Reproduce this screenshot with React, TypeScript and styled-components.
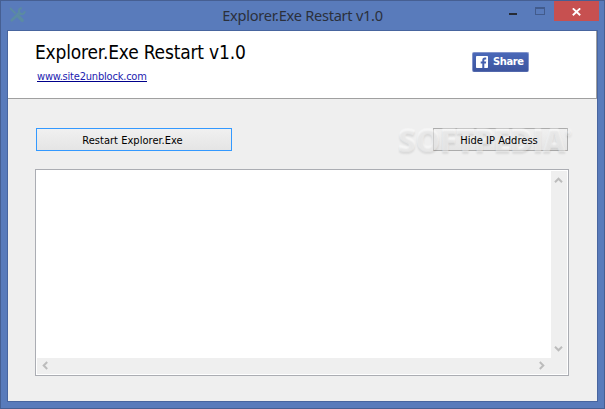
import styled, { createGlobalStyle } from "styled-components";

function App() {
  return (
    <Window>
      <GlobalStyle />
      <TitleBar>
        <ToolsIcon />
        <Caption>Explorer.Exe Restart v1.0</Caption>
        <WindowControls>
          <Minimize aria-label="Minimize" />
          <Maximize aria-label="Maximize" />
          <Close aria-label="Close">
            <svg width="9" height="8" viewBox="0 0 9 8">
              <path d="M0.8 0.4 L8.2 7.2 M8.2 0.4 L0.8 7.2" stroke="#fff" strokeWidth="1.9" />
            </svg>
          </Close>
        </WindowControls>
      </TitleBar>
      <Client>
        <Header>
          <div>
            <Title>Explorer.Exe Restart v1.0</Title>
            <SiteLink href="#">www.site2unblock.com</SiteLink>
          </div>
          <ShareButton>
            <svg width="12" height="12" viewBox="0 0 12 12">
              <rect width="12" height="12" rx="0.8" fill="#fff" />
              <path
                d="M6.3 12V7.4H4.7V5.5H6.3V4.3C6.3 2.5 7.3 1.6 8.9 1.6H10.2V3.4H9.3C8.5 3.4 8.3 3.8 8.3 4.4V5.5H10.2L9.9 7.4H8.3V12Z"
                fill="#4560ae"
              />
            </svg>
            <span>Share</span>
          </ShareButton>
        </Header>
        <Body>
          <ButtonRow>
            <Button $width={196} $focused>
              <Label>Restart Explorer.Exe</Label>
            </Button>
            <Button $width={135}>
              <Label>Hide IP Address</Label>
            </Button>
            <Watermark>
              SOFTPEDIA<sup>®</sup>
            </Watermark>
          </ButtonRow>
          <LogBox>
            <LogText />
            <VerticalBar>
              <Chevron direction="up" />
              <Chevron direction="down" />
            </VerticalBar>
            <HorizontalBar>
              <Chevron direction="left" />
              <Chevron direction="right" />
            </HorizontalBar>
          </LogBox>
        </Body>
      </Client>
    </Window>
  );
}
export default App;

function ToolsIcon() {
  return (
    <svg width="17" height="16" viewBox="0 0 17 16" fill="none" stroke="#5b8ba2">
      <path d="M1 1 L6.5 6.5" strokeWidth="1.8" />
      <path d="M9.4 9.4 L13.2 13.2" strokeWidth="3.4" strokeLinecap="round" />
      <path d="M2.8 13.2 L10.4 5.8" strokeWidth="2.8" strokeLinecap="round" />
      <path d="M12.8 1.3 A2.9 2.9 0 1 0 15.7 4.3" strokeWidth="2" />
    </svg>
  );
}

const chevrons = {
  up: "M1 6.2 L4.5 2.7 L8 6.2",
  down: "M1 2.8 L4.5 6.3 L8 2.8",
  left: "M6.2 1 L2.7 4.5 L6.2 8",
  right: "M2.8 1 L6.3 4.5 L2.8 8",
};

function Chevron({ direction }: { direction: keyof typeof chevrons }) {
  return (
    <svg width="9" height="9" viewBox="0 0 9 9" fill="none">
      <path d={chevrons[direction]} stroke="#bcbcbc" strokeWidth="2" />
    </svg>
  );
}

const GlobalStyle = createGlobalStyle`
  * {
    box-sizing: border-box;
  }
  body {
    margin: 0;
    font-family: "DejaVu Sans Condensed", "DejaVu Sans", sans-serif;
    font-stretch: condensed;
  }
`;

const Window = styled.div`
  display: flex;
  flex-direction: column;
  width: 605px;
  height: 409px;
  padding: 0 6px 6px;
  background: #597bbb;
  border: 1px solid #465f92;
`;

const TitleBar = styled.header`
  display: grid;
  grid-template-columns: 100px 1fr 100px;
  height: 29px;

  > svg {
    margin: 6px 0 0 2px;
  }
`;

const Caption = styled.div`
  padding-top: 4px;
  text-align: center;
  font: 14.6px/20px "Noto Sans", sans-serif;
  letter-spacing: -0.27px;
  white-space: nowrap;
  color: #2b303b;
`;

const WindowControls = styled.div`
  display: flex;
  align-items: flex-start;
  justify-content: flex-end;
  margin-right: -1px;
`;

const Minimize = styled.button`
  width: 8px;
  height: 2px;
  margin: 12px 18px 0 0;
  padding: 0;
  border: none;
  background: #262b35;
`;

const Maximize = styled.button`
  width: 10px;
  height: 8px;
  margin: 6px 9px 0 0;
  padding: 0;
  border: 1px solid #425b8c;
  border-top-width: 2px;
  background: none;
`;

const Close = styled.button`
  display: flex;
  width: 45px;
  height: 20px;
  padding: 7px 0 0 18px;
  border: none;
  background: #c75050;
`;

const Client = styled.main`
  flex: 1;
  border: 1px solid #48659f;
  background: #efefef;
`;

const Header = styled.section`
  display: flex;
  justify-content: space-between;
  height: 68px;
  padding: 0 67px 0 27px;
  background: #fff;
  border-right: 1px solid #a0a0a0;
  border-bottom: 1px solid #a0a0a0;
`;

const Title = styled.h1`
  margin: 8px 0 0;
  font-size: 19px;
  font-weight: 400;
  line-height: 26px;
  letter-spacing: -0.18px;
  white-space: nowrap;
  color: #000;
`;

const SiteLink = styled.a`
  display: block;
  width: 110px;
  height: 12px;
  margin: 5px 0 0 2px;
  border-bottom: 1px solid #00008b;
  font-size: 11px;
  line-height: 13px;
  letter-spacing: -0.2px;
  white-space: nowrap;
  text-decoration: none;
  color: #1c1cb0;
`;

const ShareButton = styled.button`
  display: flex;
  align-items: center;
  gap: 5px;
  width: 57px;
  height: 20px;
  margin-top: 21px;
  padding: 0 0 0 3px;
  border: 1px solid #8193cb;
  border-bottom-color: #5268ad;
  border-radius: 2px;
  background: linear-gradient(#4a68b8, #3d559f);
  color: #fff;
  font: bold 11px/14px "DejaVu Sans Condensed", "DejaVu Sans", sans-serif;
  font-stretch: condensed;
  letter-spacing: -0.35px;
`;

const Body = styled.section`
  padding: 29px 28px 0 27px;
`;

const ButtonRow = styled.div`
  position: relative;
  display: flex;
  justify-content: space-between;
  padding: 0 1px;
`;

const Button = styled.button<{ $width: number; $focused?: boolean }>`
  width: ${(props) => props.$width}px;
  height: 23px;
  padding: 2px 3px 0 0;
  border: 1px solid ${(props) => (props.$focused ? "#3399ff" : "#acacac")};
  background: linear-gradient(#f0f0f0, #e5e5e5);
  font: 11px/14px "DejaVu Sans Condensed", "DejaVu Sans", sans-serif;
  font-stretch: condensed;
  letter-spacing: 0.03px;
  color: #000;
`;

// keeps the caption above the watermark
const Label = styled.span`
  position: relative;
  z-index: 1;
`;

const Watermark = styled.div`
  position: absolute;
  top: -4px;
  left: 363px;
  font: 800 31px/32px "Open Sans", sans-serif;
  letter-spacing: -0.35px;
  white-space: nowrap;
  color: rgba(255, 255, 255, 0.3);
  text-shadow: 0 2px 2px rgba(0, 0, 0, 0.09), 0 -1px 1px rgba(255, 255, 255, 0.35);
  pointer-events: none;

  sup {
    font-size: 8px;
    line-height: 0;
    vertical-align: 16px;
  }
`;

const LogBox = styled.div`
  display: grid;
  grid-template-columns: 1fr 16px;
  grid-template-rows: 1fr 16px;
  height: 207px;
  margin-top: 18px;
  padding: 1px;
  border: 1px solid #abadb3;
  background: #fff;
`;

const LogText = styled.div`
  background: #fff;
`;

const VerticalBar = styled.div`
  display: flex;
  flex-direction: column;
  align-items: center;
  justify-content: space-between;
  padding: 5px 1px 5px 0;
  background: #efefef;
`;

const HorizontalBar = styled.div`
  display: flex;
  grid-column: 1 / 3;
  align-items: center;
  justify-content: space-between;
  padding: 0 21px 1px 4px;
  background: #efefef;
`;
